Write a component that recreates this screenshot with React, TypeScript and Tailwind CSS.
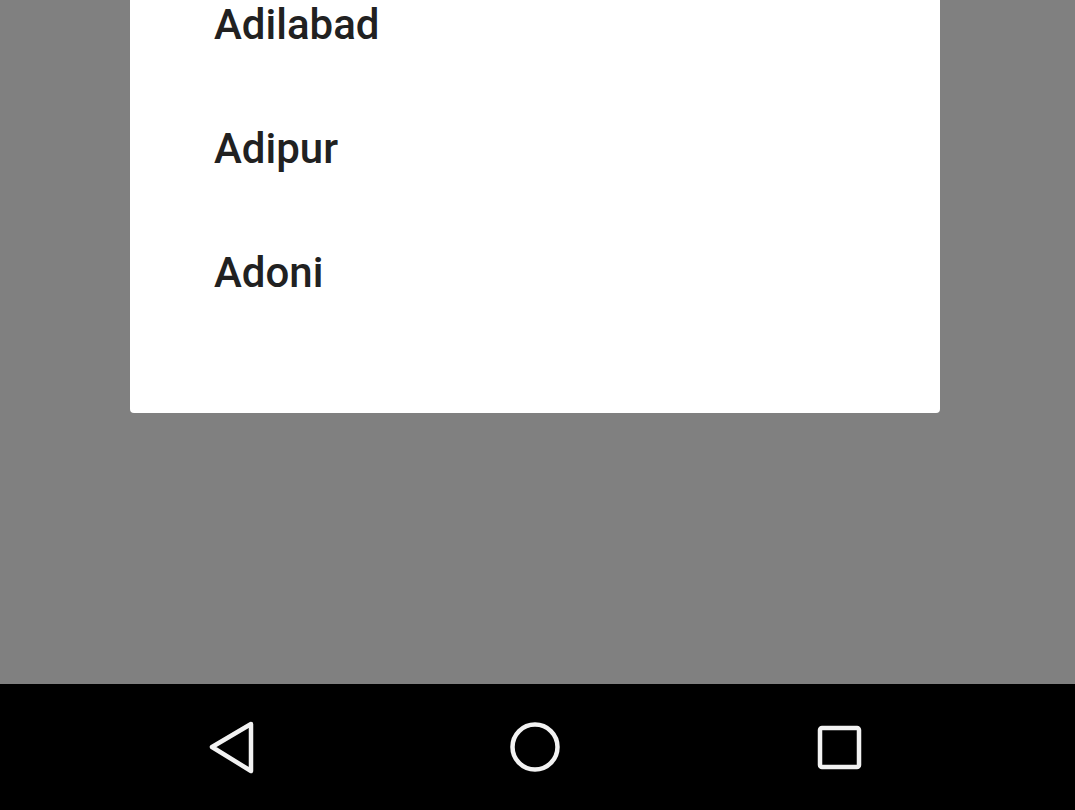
const cities = ["Adilabad", "Adipur", "Adoni"];

export default function App() {
  return (
    <div className="flex h-[810px] w-[1075px] flex-col overflow-hidden bg-[#808080] font-['Roboto',sans-serif]">
      <div className="h-[684px] shrink-0">
        <div className="ml-[130px] h-[413px] w-[810px] overflow-hidden rounded-b-[4px] bg-white">
          <ul className="-mt-[37px]">
            {cities.map((city) => (
              <li key={city} className="flex h-[124px] items-center pl-[84px]">
                <span className="text-[42px] leading-none font-medium text-[#212121]">{city}</span>
              </li>
            ))}
          </ul>
        </div>
      </div>

      <nav className="flex h-[126px] shrink-0 items-center bg-black">
        <div className="relative h-full w-full">
          <svg width="1075" height="126" viewBox="0 684 1075 126" className="block">
            <path
              d="M251 724 L212 747 L251 771 Z"
              fill="none"
              stroke="#f2f2f2"
              strokeWidth="4.5"
              strokeLinejoin="round"
            />
            <circle cx="535" cy="747" r="22.5" fill="none" stroke="#f2f2f2" strokeWidth="4.5" />
            <rect
              x="820"
              y="728"
              width="39"
              height="39"
              rx="2"
              fill="none"
              stroke="#f2f2f2"
              strokeWidth="4.5"
            />
          </svg>
        </div>
      </nav>
    </div>
  );
}
